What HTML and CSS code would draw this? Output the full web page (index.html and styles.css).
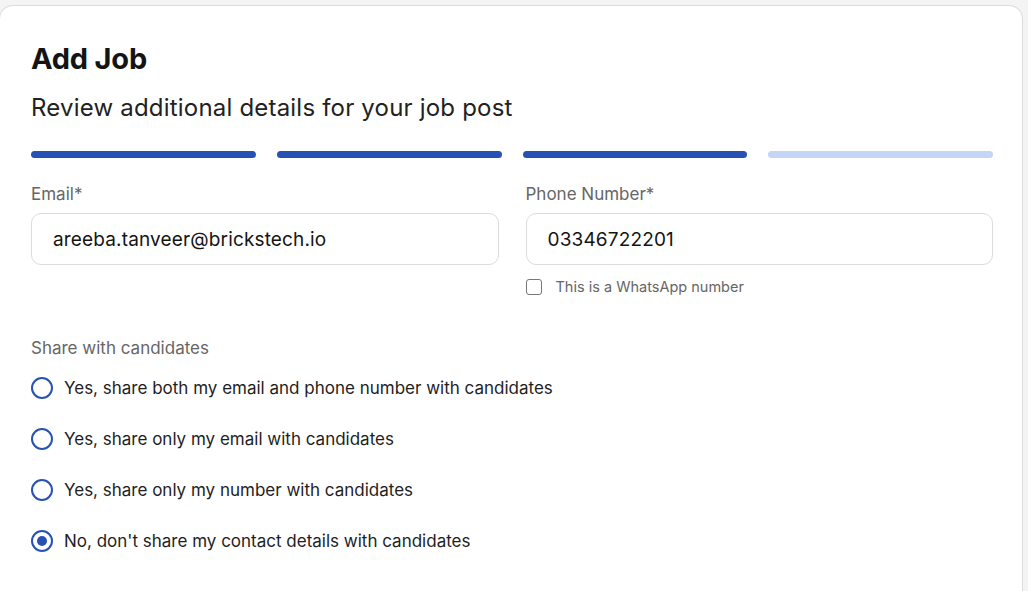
FILE: index.html
```html
<!DOCTYPE html>
<html lang="en">
<head>
<meta charset="utf-8">
<title>Add Job</title>
<link rel="stylesheet" href="styles.css">
</head>
<body>
<div class="card">
  <h1 class="title">Add Job</h1>
  <p class="subtitle">Review additional details for your job post</p>
  <div class="steps">
    <span class="step done"></span>
    <span class="step done"></span>
    <span class="step done"></span>
    <span class="step"></span>
  </div>
  <div class="fields">
    <div class="field">
      <label class="label">Email*</label>
      <div class="input input-email">areeba.tanveer@brickstech.io</div>
    </div>
    <div class="field">
      <label class="label">Phone Number*</label>
      <div class="input">03346722201</div>
      <div class="check">
        <span class="box"></span>
        <span class="check-text">This is a WhatsApp number</span>
      </div>
    </div>
  </div>
  <div class="share">
    <div class="label">Share with candidates</div>
    <div class="radios">
      <div class="radio"><span class="dot"></span><span>Yes, share both my email and phone number with candidates</span></div>
      <div class="radio"><span class="dot"></span><span>Yes, share only my email with candidates</span></div>
      <div class="radio"><span class="dot"></span><span>Yes, share only my number with candidates</span></div>
      <div class="radio checked"><span class="dot"></span><span>No, don't share my contact details with candidates</span></div>
    </div>
  </div>
</div>
</body>
</html>
```
FILE: styles.css
```css
* { box-sizing: border-box; }
html, body { margin: 0; padding: 0; }
body {
  background: #f4f4f4;
  font-family: Inter, "Open Sans", sans-serif;
  color: #1a1a1a;
  padding-top: 5px;
  height: 591px;
  overflow: hidden;
}
.card {
  margin-left: -1px;
  width: 1024px;
  height: 586px;
  background: #fff;
  border: 1px solid #dcdcdc;
  border-bottom: 0;
  border-radius: 14px 14px 0 0;
  padding: 33px 29px 0 31px;
}
.title {
  margin: 0;
  font-size: 29px;
  font-weight: 700;
  line-height: 40px;
  letter-spacing: -0.2px;
  color: #141414;
}
.subtitle {
  margin: 14px 0 0;
  font-size: 24px;
  line-height: 30px;
  font-weight: 400;
  letter-spacing: 0.2px;
  color: #222;
}
.steps {
  display: flex;
  gap: 21px;
  margin-top: 28px;
}
.step {
  flex: 1;
  height: 7px;
  border-radius: 4px;
  background: #c4d5f6;
}
.step.done { background: #2752b4; }
.fields {
  display: flex;
  gap: 27px;
  margin-top: 24px;
}
.field { flex: 1; }
.label {
  display: block;
  font-size: 17px;
  line-height: 24px;
  color: #666;
}
.input {
  margin-top: 7px;
  height: 52px;
  border: 1px solid #dcdcdc;
  border-radius: 10px;
  padding: 0 21px;
  display: flex;
  align-items: center;
  font-size: 19px;
  letter-spacing: 0.15px;
  color: #141414;
}
.check {
  display: flex;
  align-items: center;
  gap: 14px;
  margin-top: 13px;
}
.box {
  width: 16px;
  height: 16px;
  border: 1.5px solid #777;
  border-radius: 3px;
}
.check-text {
  font-size: 14.5px;
  color: #666;
}
.share { margin-top: 41px; }
.radios {
  display: flex;
  flex-direction: column;
  gap: 29px;
  margin-top: 17px;
}
.radio {
  display: flex;
  align-items: center;
  gap: 11px;
  font-size: 17px;
  line-height: 22px;
  color: #1e1e1e;
}
.dot {
  width: 22px;
  height: 22px;
  border: 2px solid #2752b4;
  border-radius: 50%;
  display: flex;
  align-items: center;
  justify-content: center;
}
.radio.checked .dot::after {
  content: "";
  width: 10px;
  height: 10px;
  border-radius: 50%;
  background: #2752b4;
}
```
